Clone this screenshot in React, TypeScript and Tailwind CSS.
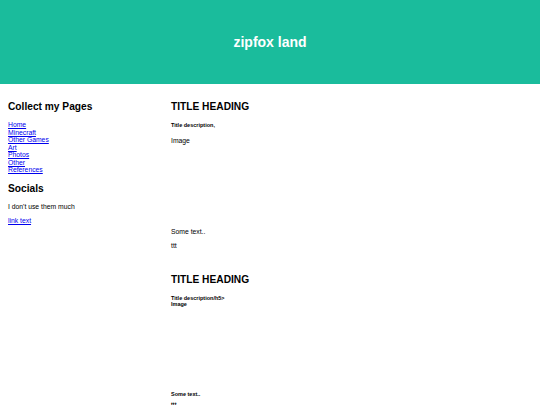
import React from 'react';

const pages = ['Home', 'Minecraft', 'Other Games', 'Art', 'Photos', 'Other', 'References'];

const App: React.FC = () => {
  return (
    <div className="w-[540px] h-[405px] overflow-hidden bg-white text-black font-['Liberation_Sans',Arial,sans-serif]">
      <div className="h-[84px] bg-[#1abc9c] flex items-center justify-center">
        <h1 className="text-[14px] leading-[16px] font-bold text-white">zipfox land</h1>
      </div>

      <div className="flex px-[8px]">
        <div className="w-[163px] flex flex-col">
          <h2 className="mt-[16px] text-[10.2px] leading-[13px] font-bold">Collect my Pages</h2>
          <ul className="mt-[8px] text-[6.8px] leading-[7.5px]">
            {pages.map((p) => (
              <li key={p}>
                <a href="#" className="text-[#0000ee] underline">{p}</a>
              </li>
            ))}
          </ul>
          <h2 className="mt-[8px] text-[10.2px] leading-[13px] font-bold">Socials</h2>
          <p className="mt-[8.5px] text-[6.8px] leading-[8px]">I don't use them much</p>
          <a href="#" className="mt-[6px] text-[6.8px] leading-[8px] text-[#0000ee] underline">link text</a>
        </div>

        <div className="flex-1 flex flex-col">
          <h2 className="mt-[16px] text-[10.2px] leading-[13px] font-bold">TITLE HEADING</h2>
          <h5 className="mt-[8.5px] text-[5.5px] leading-[7px] font-bold">Title description,</h5>
          <div className="mt-[8.5px] h-[91px] text-[6.8px] leading-[8px]">Image</div>
          <p className="text-[6.8px] leading-[8px]">Some text..</p>
          <p className="mt-[6px] text-[6.8px] leading-[8px]">ttt</p>

          <h2 className="mt-[22.5px] text-[10.2px] leading-[13px] font-bold">TITLE HEADING</h2>
          <div className="mt-[9px] text-[5.5px] leading-[6.5px] font-bold">
            <div>Title description/h5&gt;</div>
            <div className="h-[89.5px]">Image</div>
            <p>Some text..</p>
            <p className="mt-[4px]">ttt</p>
          </div>
        </div>
      </div>
    </div>
  );
};

export default App;
